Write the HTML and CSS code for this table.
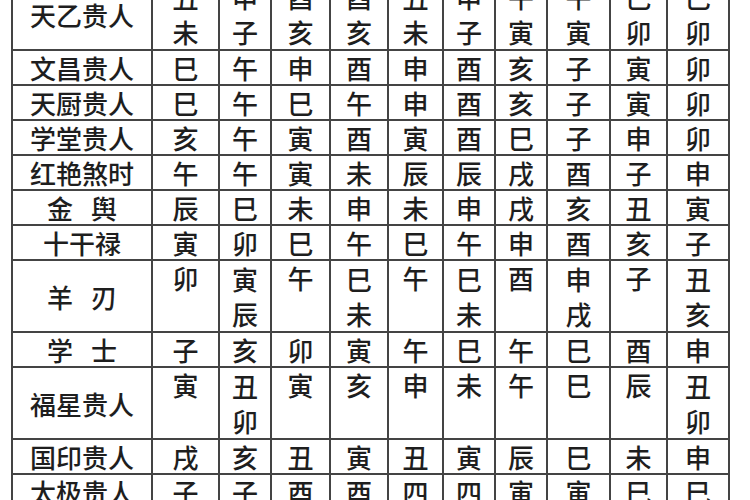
FILE: index.html
```html
<!DOCTYPE html>
<html lang="zh-CN">
<head>
<meta charset="utf-8">
<title>神煞表</title>
<link rel="stylesheet" href="styles.css">
</head>
<body>
<div class="grid">
  <div class="c lab">天乙贵人</div>
  <div class="c stack"><span>丑</span><span>未</span></div>
  <div class="c stack"><span>申</span><span>子</span></div>
  <div class="c stack"><span>酉</span><span>亥</span></div>
  <div class="c stack"><span>酉</span><span>亥</span></div>
  <div class="c stack"><span>丑</span><span>未</span></div>
  <div class="c stack"><span>申</span><span>子</span></div>
  <div class="c stack"><span>午</span><span>寅</span></div>
  <div class="c stack"><span>午</span><span>寅</span></div>
  <div class="c stack"><span>巳</span><span>卯</span></div>
  <div class="c stack"><span>巳</span><span>卯</span></div>

  <div class="c lab">文昌贵人</div>
  <div class="c">巳</div><div class="c">午</div><div class="c">申</div><div class="c">酉</div><div class="c">申</div>
  <div class="c">酉</div><div class="c">亥</div><div class="c">子</div><div class="c">寅</div><div class="c">卯</div>

  <div class="c lab">天厨贵人</div>
  <div class="c">巳</div><div class="c">午</div><div class="c">巳</div><div class="c">午</div><div class="c">申</div>
  <div class="c">酉</div><div class="c">亥</div><div class="c">子</div><div class="c">寅</div><div class="c">卯</div>

  <div class="c lab">学堂贵人</div>
  <div class="c">亥</div><div class="c">午</div><div class="c">寅</div><div class="c">酉</div><div class="c">寅</div>
  <div class="c">酉</div><div class="c">巳</div><div class="c">子</div><div class="c">申</div><div class="c">卯</div>

  <div class="c lab">红艳煞时</div>
  <div class="c">午</div><div class="c">午</div><div class="c">寅</div><div class="c">未</div><div class="c">辰</div>
  <div class="c">辰</div><div class="c">戌</div><div class="c">酉</div><div class="c">子</div><div class="c">申</div>

  <div class="c lab spaced">金 舆</div>
  <div class="c">辰</div><div class="c">巳</div><div class="c">未</div><div class="c">申</div><div class="c">未</div>
  <div class="c">申</div><div class="c">戌</div><div class="c">亥</div><div class="c">丑</div><div class="c">寅</div>

  <div class="c lab">十干禄</div>
  <div class="c">寅</div><div class="c">卯</div><div class="c">巳</div><div class="c">午</div><div class="c">巳</div>
  <div class="c">午</div><div class="c">申</div><div class="c">酉</div><div class="c">亥</div><div class="c">子</div>

  <div class="c lab spaced">羊 刃</div>
  <div class="c">卯</div>
  <div class="c stack"><span>寅</span><span>辰</span></div>
  <div class="c">午</div>
  <div class="c stack"><span>巳</span><span>未</span></div>
  <div class="c">午</div>
  <div class="c stack"><span>巳</span><span>未</span></div>
  <div class="c">酉</div>
  <div class="c stack"><span>申</span><span>戌</span></div>
  <div class="c">子</div>
  <div class="c stack"><span>丑</span><span>亥</span></div>

  <div class="c lab spaced">学 士</div>
  <div class="c">子</div><div class="c">亥</div><div class="c">卯</div><div class="c">寅</div><div class="c">午</div>
  <div class="c">巳</div><div class="c">午</div><div class="c">巳</div><div class="c">酉</div><div class="c">申</div>

  <div class="c lab">福星贵人</div>
  <div class="c">寅</div>
  <div class="c stack"><span>丑</span><span>卯</span></div>
  <div class="c">寅</div>
  <div class="c">亥</div>
  <div class="c">申</div>
  <div class="c">未</div>
  <div class="c">午</div>
  <div class="c">巳</div>
  <div class="c">辰</div>
  <div class="c stack"><span>丑</span><span>卯</span></div>

  <div class="c lab">国印贵人</div>
  <div class="c">戌</div><div class="c">亥</div><div class="c">丑</div><div class="c">寅</div><div class="c">丑</div>
  <div class="c">寅</div><div class="c">辰</div><div class="c">巳</div><div class="c">未</div><div class="c">申</div>

  <div class="c lab">太极贵人</div>
  <div class="c">子</div><div class="c">子</div><div class="c">酉</div><div class="c">酉</div><div class="c">四</div>
  <div class="c">四</div><div class="c">寅</div><div class="c">寅</div><div class="c">巳</div><div class="c">巳</div>
</div>
</body>
</html>
```

FILE: styles.css
```css
html, body {
  margin: 0;
  padding: 0;
  background: #ffffff;
  overflow: hidden;
}

body {
  font-family: "Noto Sans CJK SC", "Noto Sans CJK TC", sans-serif;
  color: #1e1e1e;
}

.grid {
  display: grid;
  grid-template-columns: 138px 65px 50px 57px 56px 53px 50px 50px 61px 55px 60px;
  gap: 2px;
  background: #444444;
  border: 2px solid #444444;
  width: max-content;
  margin: -23px 0 0 11px;
}

.c {
  background: #ffffff;
  display: flex;
  flex-direction: column;
  align-items: center;
  justify-content: flex-start;
  font-size: 26px;
  font-weight: 500;
  line-height: 33px;
  min-height: 33px;
}

.stack span {
  display: block;
  line-height: 35px;
}

.lab {
  justify-content: center;
}

.spaced {
  word-spacing: 12px;
}
```
